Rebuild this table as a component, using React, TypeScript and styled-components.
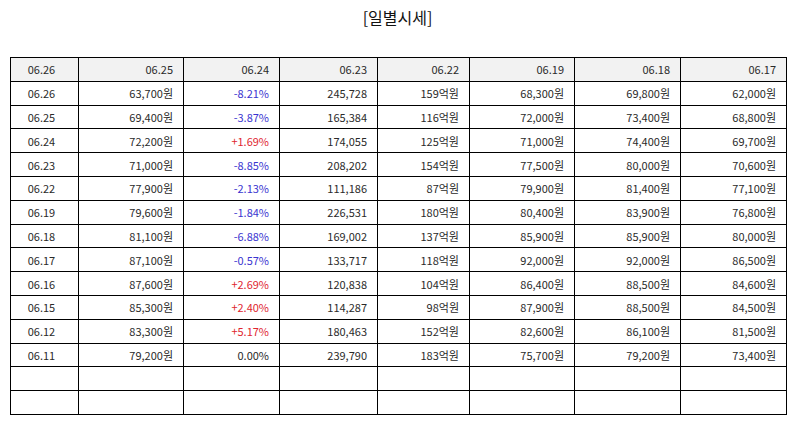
import { createGlobalStyle } from 'styled-components';
import styled from 'styled-components';

const GlobalStyle = createGlobalStyle`
  body {
    margin: 0;
    background: #ffffff;
    font-family: "Noto Sans", "Noto Sans CJK KR", sans-serif;
    color: #222;
  }
`

const Page = styled.div`
  padding: 6px 9px 0 10px;
`

const Title = styled.h2`
  margin: 0 0 24px 0;
  height: 27px;
  line-height: 23px;
  text-align: center;
  font-size: 16px;
  font-weight: normal;
  color: #111;
  font-family: "Noto Sans CJK KR", sans-serif;
`

const Table = styled.table`
  width: 776px;
  border-collapse: collapse;
  table-layout: fixed;
  font-size: 11px;
`

const Row = styled.tr`
  height: 23.8px;
`

const Cell = styled.td<{ $head?: boolean; $center?: boolean; $tone?: 'up' | 'down' }>`
  border: 1px solid #000;
  padding: 0 10px 0 4px;
  text-align: ${p => (p.$center ? 'center' : 'right')};
  background: ${p => (p.$head ? '#f2f2f2' : '#fff')};
  color: ${p => (p.$tone === 'up' ? '#e0262f' : p.$tone === 'down' ? '#3a35d0' : '#2a2a2a')};
  white-space: nowrap;
  font-family: "Noto Sans CJK KR", sans-serif;
`

const widths = [68, 105, 96, 98, 92, 105, 106, 106];
const heads = ['06.26', '06.25', '06.24', '06.23', '06.22', '06.19', '06.18', '06.17'];

const rows: string[][] = [
  ['06.26', '63,700원', '-8.21%', '245,728', '159억원', '68,300원', '69,800원', '62,000원'],
  ['06.25', '69,400원', '-3.87%', '165,384', '116억원', '72,000원', '73,400원', '68,800원'],
  ['06.24', '72,200원', '+1.69%', '174,055', '125억원', '71,000원', '74,400원', '69,700원'],
  ['06.23', '71,000원', '-8.85%', '208,202', '154억원', '77,500원', '80,000원', '70,600원'],
  ['06.22', '77,900원', '-2.13%', '111,186', '87억원', '79,900원', '81,400원', '77,100원'],
  ['06.19', '79,600원', '-1.84%', '226,531', '180억원', '80,400원', '83,900원', '76,800원'],
  ['06.18', '81,100원', '-6.88%', '169,002', '137억원', '85,900원', '85,900원', '80,000원'],
  ['06.17', '87,100원', '-0.57%', '133,717', '118억원', '92,000원', '92,000원', '86,500원'],
  ['06.16', '87,600원', '+2.69%', '120,838', '104억원', '86,400원', '88,500원', '84,600원'],
  ['06.15', '85,300원', '+2.40%', '114,287', '98억원', '87,900원', '88,500원', '84,500원'],
  ['06.12', '83,300원', '+5.17%', '180,463', '152억원', '82,600원', '86,100원', '81,500원'],
  ['06.11', '79,200원', '0.00%', '239,790', '183억원', '75,700원', '79,200원', '73,400원'],
  ['', '', '', '', '', '', '', ''],
  ['', '', '', '', '', '', '', ''],
];

const toneOf = (v: string): 'up' | 'down' | undefined =>
  v.startsWith('+') ? 'up' : v.startsWith('-') ? 'down' : undefined;

function App() {
  return (
    <Page>
      <GlobalStyle />
      <Title>[일별시세]</Title>
      <Table>
        <colgroup>
          {widths.map((w, i) => <col key={i} style={{ width: w }} />)}
        </colgroup>
        <tbody>
          <Row>
            {heads.map((h, i) => <Cell key={i} $head $center={i === 0}>{h}</Cell>)}
          </Row>
          {rows.map((r, ri) => (
            <Row key={ri}>
              {r.map((v, ci) => (
                <Cell key={ci} $center={ci === 0} $tone={ci === 2 ? toneOf(v) : undefined}>{v}</Cell>
              ))}
            </Row>
          ))}
        </tbody>
      </Table>
    </Page>
  );
}

export default App;
